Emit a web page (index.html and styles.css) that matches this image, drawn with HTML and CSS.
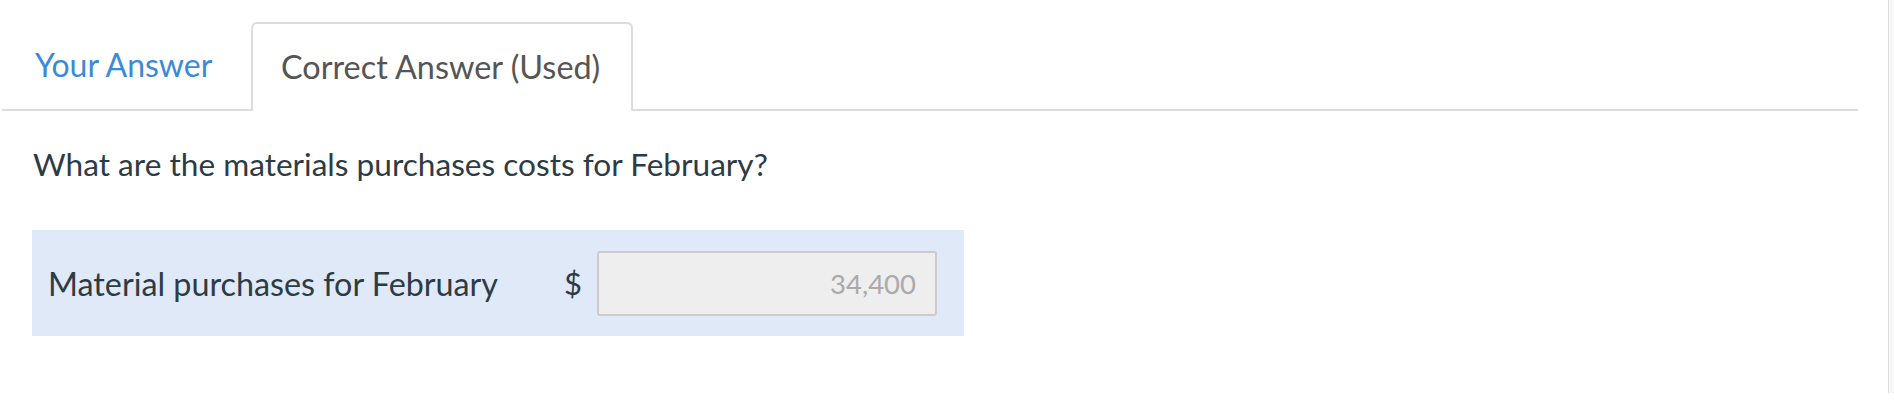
FILE: index.html
```html
<!DOCTYPE html>
<html>
<head>
<meta charset="utf-8">
<link rel="stylesheet" href="styles.css">
</head>
<body>
<div class="page">
  <main class="main">
    <div class="tabs">
      <div class="tab tab-link">Your Answer</div>
      <div class="tab tab-active">Correct Answer (Used)</div>
    </div>
    <p class="question">What are the materials purchases costs for February?</p>
    <div class="answer-row">
      <span class="label">Material purchases for February</span>
      <span class="dollar">$</span>
      <div class="input">34,400</div>
    </div>
  </main>
  <aside class="gutter"></aside>
</div>
</body>
</html>
```
FILE: styles.css
```css
html, body {
  margin: 0;
  padding: 0;
  background: #fff;
}
body {
  font-family: Lato, "Open Sans", sans-serif;
  color: #2d3b45;
}
.page {
  display: flex;
  width: 1894px;
  height: 404px;
}
.main {
  width: 1888px;
  padding-left: 2px;
  box-sizing: border-box;
}
.tabs {
  display: flex;
  align-items: flex-end;
  width: 1856px;
  height: 109px;
  border-bottom: 2px solid #dcdcdc;
  box-sizing: content-box;
}
.tab {
  font-size: 32px;
  height: 87px;
  box-sizing: border-box;
  display: flex;
  align-items: center;
  padding-bottom: 2px;
}
.tab-link {
  color: #3b8ad9;
  width: 249px;
  padding-left: 33px;
}
.tab-active {
  color: #555;
  font-size: 32.4px;
  width: 382px;
  padding-left: 28px;
  background: #fff;
  border: 2px solid #dcdcdc;
  border-bottom: none;
  border-radius: 6px 6px 0 0;
  margin-bottom: -2px;
  height: 89px;
}
.question {
  margin: 0;
  padding: 34px 0 0 31px;
  font-size: 31.6px;
  line-height: 38px;
  color: #2d3b45;
}
.answer-row {
  display: flex;
  align-items: center;
  margin: 47px 0 0 30px;
  width: 932px;
  height: 106px;
  background: #dfe9f7;
  box-sizing: border-box;
  padding-left: 16px;
}
.label {
  font-size: 32.3px;
  color: #2d3b45;
  width: 516px;
}
.dollar {
  font-size: 31px;
  width: 33px;
}
.input {
  width: 340px;
  height: 65px;
  box-sizing: border-box;
  border: 2px solid #cccccc;
  border-radius: 3px;
  background: #eeeeee;
  color: #aaaaaa;
  font-size: 27.5px;
  display: flex;
  align-items: center;
  justify-content: flex-end;
  padding-right: 19px;
}
.gutter {
  width: 6px;
  height: 393px;
  border-left: 1px solid #dddddd;
  background: #f8f8f8;
  box-sizing: border-box;
}
```
